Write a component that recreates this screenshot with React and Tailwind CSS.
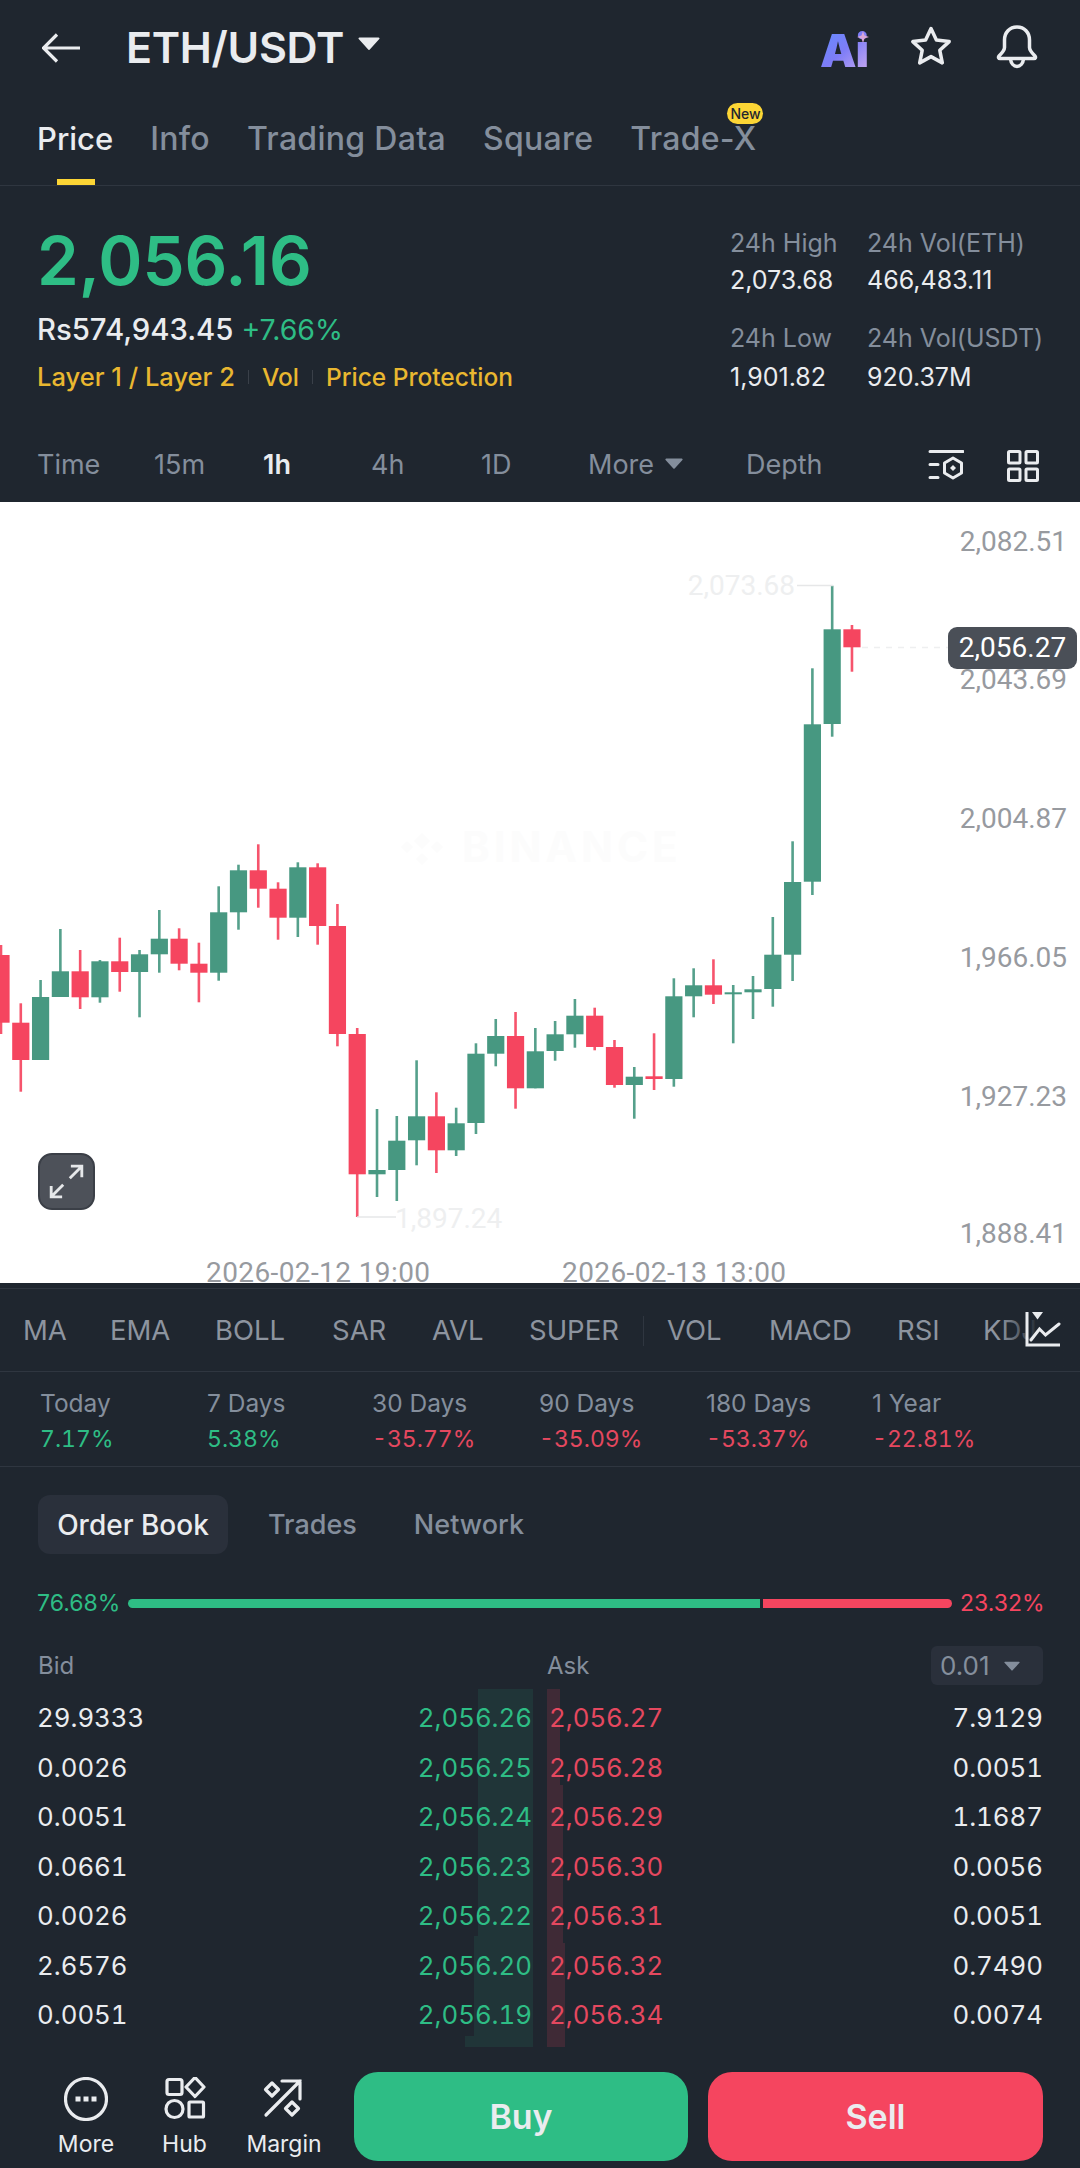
import React from 'react';

const G = '#479881';
const R = '#f5455f';

// [wickTop, bodyTop, bodyBottom, wickBottom, up]
const candles = [
  [945, 955, 1022.7, 1034, 0],
  [1003.3, 1022.7, 1060, 1091.7, 0],
  [980, 997, 1060, 1060, 1],
  [929, 971.3, 997, 997, 1],
  [950, 971.3, 997.3, 1009, 0],
  [960, 961.3, 997.3, 1002.7, 1],
  [937.7, 961.3, 972, 991.7, 0],
  [950, 954.3, 972, 1017.3, 1],
  [910, 938.7, 954.3, 972.7, 1],
  [928.3, 938.7, 963.7, 970.3, 0],
  [942.7, 963.7, 972.7, 1002.3, 0],
  [886.3, 912.3, 972.7, 980.7, 1],
  [864.7, 870.3, 912.3, 929.7, 1],
  [844.3, 870.3, 888.7, 907.7, 0],
  [882.3, 888.7, 917.7, 939.7, 0],
  [862.3, 867.3, 917.7, 937, 1],
  [863.3, 867.3, 926, 944.7, 0],
  [904, 926, 1034, 1046.3, 0],
  [1028, 1034, 1174.3, 1217, 0],
  [1109, 1170, 1174.3, 1197, 1],
  [1116, 1140.7, 1170, 1201, 1],
  [1060.3, 1116.3, 1140.3, 1165.3, 1],
  [1092.3, 1116.3, 1150.3, 1173, 0],
  [1107.7, 1123.3, 1150.3, 1156, 1],
  [1043.3, 1053.7, 1123, 1134, 1],
  [1019, 1036, 1053.7, 1066.3, 1],
  [1012, 1036, 1088.3, 1108.7, 0],
  [1028, 1051.3, 1088.3, 1088.3, 1],
  [1021, 1034.3, 1051, 1060.7, 1],
  [999, 1015.7, 1034.3, 1047.7, 1],
  [1007.7, 1015.7, 1047, 1050.3, 0],
  [1040, 1047, 1085, 1087.7, 0],
  [1067, 1076.7, 1085, 1118.7, 1],
  [1033.3, 1076.3, 1079, 1090, 0],
  [978.3, 996.3, 1079, 1086.7, 1],
  [968.3, 985.3, 996.3, 1017.3, 1],
  [959.3, 985.3, 994.7, 1004, 0],
  [985, 992.3, 994.3, 1043.3, 1],
  [976, 989.3, 992.3, 1019, 1],
  [917, 954.7, 989, 1006.7, 1],
  [841.3, 882, 954.7, 981, 1],
  [668.3, 724.3, 881.7, 895, 1],
  [585.7, 629.3, 724, 736.7, 1],
  [625, 629.3, 647.3, 671.7, 0],
];

const axis = [
  ['2,082.51', 541],
  ['2,043.69', 679],
  ['2,004.87', 818],
  ['1,966.05', 957],
  ['1,927.23', 1096],
  ['1,888.41', 1233],
];

const periods = [
  ['Today', '7.17%', true, 'w-[167px]'],
  ['7 Days', '5.38%', true, 'w-[165px]'],
  ['30 Days', '-35.77%', false, 'w-[167px]'],
  ['90 Days', '-35.09%', false, 'w-[167px]'],
  ['180 Days', '-53.37%', false, 'w-[166px]'],
  ['1 Year', '-22.81%', false, 'w-[165px]'],
];

const book = [
  ['29.9333', '2,056.26', '2,056.27', '7.9129'],
  ['0.0026', '2,056.25', '2,056.28', '0.0051'],
  ['0.0051', '2,056.24', '2,056.29', '1.1687'],
  ['0.0661', '2,056.23', '2,056.30', '0.0056'],
  ['0.0026', '2,056.22', '2,056.31', '0.0051'],
  ['2.6576', '2,056.20', '2,056.32', '0.7490'],
  ['0.0051', '2,056.19', '2,056.34', '0.0074'],
];

const Caret = ({ className }) => (
  <svg viewBox="0 0 22 13" className={className} fill="currentColor">
    <path d="M1.500.5h19a1 1 0 0 1 .8 1.600l-9.500 10.400a1 1 0 0 1-1.600 0L.7 2.100A1 1 0 0 1 1.500.5z" />
  </svg>
);

const Chart = () => (
  <div className="relative h-[781px] shrink-0 overflow-hidden bg-white">
    <svg viewBox="0 502 1080 781" className="absolute inset-0 h-[781px] w-[1080px]">
      {/* watermark */}
      <g fill="#fcfcfc">
        <path d="M422 833l8 8-8 8-8-8zM407 841l6 6-6 6-6-6zM437 841l6 6-6 6-6-6zM422 853l6 6-6 6-6-6z" />
      </g>
      <text x="462" y="862" fontSize="42" fontWeight="700" letterSpacing="4" fill="#fcfcfc" className="font-['Inter',sans-serif]">BINANCE</text>

      {candles.map(([wt, bt, bb, wb, up], i) => {
        const x = 1 + 19.79 * i;
        const c = up ? G : R;
        return (
          <g key={i}>
            <rect x={x - 1.3} y={wt} width="2.6" height={wb - wt} fill={c} fillOpacity="0.92" />
            <rect x={x - 8.6} y={bt} width="17.2" height={bb - bt} fill={c} />
          </g>
        );
      })}

      {/* high / low markers */}
      <line x1="797" y1="585.5" x2="833" y2="585.5" stroke="#e6e7e8" strokeWidth="1.5" />
      <line x1="357" y1="1217" x2="396" y2="1217" stroke="#e6e7e8" strokeWidth="1.5" />
      <line x1="862" y1="647.5" x2="948" y2="647.5" stroke="#eeeff0" strokeWidth="1.5" strokeDasharray="6 6" />

      <g className="font-['Roboto',sans-serif]" fontSize="28">
        <text x="795" y="595" textAnchor="end" fill="#eeeff0">2,073.68</text>
        <text x="395" y="1228" fill="#eeeff0">1,897.24</text>
        {axis.map(([t, y]) => (
          <text key={t} x="1067" y={y + 9.5} textAnchor="end" fill="#979a9f">{t}</text>
        ))}
        <text x="206" y="1281.5" letterSpacing="0.4" fill="#979a9f">2026-02-12 19:00</text>
        <text x="562" y="1281.5" letterSpacing="0.4" fill="#979a9f">2026-02-13 13:00</text>
      </g>
    </svg>

    {/* last price tag */}
    <div className="absolute left-[948px] top-[125px] flex h-[42px] w-[129px] items-center justify-center rounded-[9px] bg-[#4a4f57] font-['Roboto',sans-serif] text-[28px] text-white">
      2,056.27
    </div>

    {/* fullscreen button */}
    <div className="absolute left-[38px] top-[651px] flex h-[57px] w-[57px] items-center justify-center rounded-[14px] border-2 border-[#3b3f47] bg-[#4d5159]">
      <svg viewBox="0 0 32 32" className="h-[35px] w-[35px]" fill="none" stroke="#e6e8ea" strokeWidth="2.6">
        <path d="M19 13L30 2M20 2h10v10M13 19L2 30M2 20v10h10" />
      </svg>
    </div>
  </div>
);

export default function App() {
  return (
    <div className="flex h-[2168px] w-[1080px] flex-col overflow-hidden bg-[#1f262f] font-['Inter',sans-serif] text-[#848e9c]">
      {/* Header */}
      <div className="relative flex h-[95px] shrink-0 items-center pl-[42px]">
        <svg viewBox="0 0 38 30" className="h-[30px] w-[38px] text-[#eaecef]" fill="none" stroke="currentColor" strokeWidth="3.2">
          <path d="M38 15H2M15 1.500L1.500 15 15 28.500" />
        </svg>
        <span className="ml-[46px] text-[43px] leading-none font-semibold tracking-[-0.3px] text-[#eaecef]">ETH/USDT</span>
        <Caret className="ml-[14px] -mt-[9px] h-[13px] w-[22px] text-[#eaecef]" />

        <div className="absolute left-[820px] top-[28px] flex">
          <span className="bg-gradient-to-br from-[#5f8dff] via-[#7d7cf7] to-[#c9a8ee] bg-clip-text text-[46px] leading-[44px] font-black tracking-[-1px] text-transparent">Ai</span>
        </div>
        <svg viewBox="0 0 12 12" className="absolute left-[857px] top-[31px] h-[12px] w-[12px]" fill="#d9a6d8">
          <path d="M6 0l1.500 4.500L12 6 7.500 7.500 6 12 4.500 7.500 0 6l4.500-1.500z" />
        </svg>
        <div className="absolute left-[910px] top-[25px] flex gap-[44px] text-[#eaecef]">
          <svg viewBox="0 0 42 42" className="h-[42px] w-[42px]" fill="none" stroke="currentColor" strokeWidth="3.5" strokeLinejoin="round">
            <path d="M21 3.500l5.400 11.600 12.800 1.500-9.400 8.700 2.500 12.600L21 31.600 9.700 37.900l2.500-12.600-9.400-8.700 12.800-1.500z" />
          </svg>
          <svg viewBox="0 0 42 44" className="h-[44px] w-[42px]" fill="none" stroke="currentColor" strokeWidth="3.500" strokeLinejoin="round">
            <path d="M21 2c-7.500 0-12.500 5.500-12.500 13v7.500c0 3-3 6-5.500 8.500-1 1.200-.4 2.500 1 2.500h34c1.400 0 2-1.300 1-2.500-2.500-2.500-5.500-5.500-5.500-8.500V15C33.500 7.500 28.500 2 21 2z" />
            <path d="M14.500 34c.5 4.500 3.300 7.500 6.500 7.500s6-3 6.500-7.500" />
          </svg>
        </div>
      </div>

      {/* Tabs */}
      <div className="relative flex h-[91px] shrink-0 gap-[37px] border-b border-[#2f3640] pl-[37px] pt-[26px] text-[32px] leading-9 font-medium tracking-[0.3px]">
        <span className="text-[31px] tracking-normal text-[#eaecef]">Price</span>
        <span>Info</span>
        <span>Trading Data</span>
        <span>Square</span>
        <span className="relative">
          Trade-X
          <span className="absolute -right-[7px] -top-[18px] flex h-[21px] w-[36px] items-center justify-center rounded-full bg-[#fcd535] text-[14px] font-medium tracking-normal text-[#1f262f]">New</span>
        </span>
        <div className="absolute bottom-0 left-[57px] h-[6px] w-[38px] bg-[#fcd535]" />
      </div>

      {/* Price stats */}
      <div className="flex h-[243px] shrink-0 items-start pl-[37px]">
        <div className="w-[693px] pt-[45px]">
          <div className="text-[67px] leading-[60px] font-semibold text-[#2ebd85]">2,056.16</div>
          <div className="mt-[21px] flex gap-[8px] text-[28.5px] leading-9">
            <span className="text-[29.3px] font-medium text-[#eaecef]">Rs574,943.45</span>
            <span className="text-[#2ebd85]">+7.66%</span>
          </div>
          <div className="mt-[11px] flex items-center text-[24.5px] leading-9 font-medium text-[#e9b730]">
            <span className="text-[25.5px]">Layer 1 / Layer 2</span>
            <span className="mx-[13px] h-[14px] w-[1px] bg-[#3a4049]" />
            <span>Vol</span>
            <span className="mx-[13px] h-[14px] w-[1px] bg-[#3a4049]" />
            <span>Price Protection</span>
          </div>
        </div>
        <div className="grid grid-cols-[137px_1fr] content-start pt-[39px] text-[25px] leading-9">
          <span>24h High</span>
          <span>24h Vol(ETH)</span>
          <span className="mt-[1px] text-[#eaecef]">2,073.68</span>
          <span className="mt-[1px] text-[#eaecef]">466,483.11</span>
          <span className="mt-[22px]">24h Low</span>
          <span className="mt-[22px]">24h Vol(USDT)</span>
          <span className="mt-[3px] text-[#eaecef]">1,901.82</span>
          <span className="mt-[3px] text-[#eaecef]">920.37M</span>
        </div>
      </div>

      {/* Timeframes */}
      <div className="flex h-[73px] shrink-0 items-center pl-[37px] text-[27px]">
        <span className="w-[117px]">Time</span>
        <span className="w-[109px]">15m</span>
        <span className="w-[108px] font-semibold text-[#eaecef]">1h</span>
        <span className="w-[110px]">4h</span>
        <span className="w-[107px]">1D</span>
        <span className="flex w-[158px] items-center">
          More
          <Caret className="ml-[11px] -mt-[5px] h-[11px] w-[18px]" />
        </span>
        <span className="w-[182px]">Depth</span>
        <svg viewBox="0 0 34 34" className="h-[34px] w-[36px] text-[#eaecef]" fill="none" stroke="currentColor" strokeWidth="3" strokeLinecap="round">
          <path d="M1 2.500h33M1 15.500h8M1 28.500h8" />
          <path d="M24 9l8.500 5v10L24 29l-8.500-5V14z" strokeLinejoin="round" />
          <path d="M24 16l3 3-3 3-3-3z" fill="currentColor" stroke="none" />
        </svg>
        <svg viewBox="0 0 32 32" className="ml-[43px] h-[32px] w-[32px] text-[#eaecef]" fill="none" stroke="currentColor" strokeWidth="3">
          <rect x="1.500" y="1.500" width="11.500" height="11.500" rx="1" />
          <rect x="19" y="1.500" width="11.500" height="11.500" rx="1" />
          <rect x="1.500" y="19" width="11.500" height="11.500" rx="1" />
          <rect x="19" y="19" width="11.500" height="11.500" rx="1" />
        </svg>
      </div>

      <Chart />

      {/* Indicators */}
      <div className="relative mt-[5px] flex h-[84px] shrink-0 items-center border-y border-[#2f3640] pl-[23px] pt-[2px] text-[27.500px] text-[#8d949f]">
        <span className="w-[87px]">MA</span>
        <span className="w-[105px]">EMA</span>
        <span className="w-[117px]">BOLL</span>
        <span className="w-[100px]">SAR</span>
        <span className="w-[97px]">AVL</span>
        <span className="w-[114px]">SUPER</span>
        <span className="h-[30px] w-[1px] bg-[#2f3640]" />
        <span className="ml-[23px] w-[102px]">VOL</span>
        <span className="w-[128px]">MACD</span>
        <span className="w-[86px]">RSI</span>
        <span>KDJ</span>
        <div className="absolute right-0 top-0 h-full w-[80px] bg-gradient-to-r from-transparent via-[#1f262f] to-[#1f262f]" />
        <svg viewBox="0 0 36 36" className="absolute left-[1025px] top-[22px] h-[36px] w-[36px] text-[#eaecef]" fill="none" stroke="currentColor" strokeWidth="3">
          <path d="M2 1v33h33" />
          <path d="M6 29l8.500-11 6 6L34 13" strokeLinecap="round" />
          <path d="M7 1h11l-5.500 7.500z" fill="currentColor" stroke="none" />
        </svg>
      </div>

      {/* Periods */}
      <div className="flex h-[95px] shrink-0 items-start border-b border-[#2f3640] pl-[40px] pt-[13px] text-[24.500px] leading-[36px]">
        {periods.map(([label, value, up, width]) => (
          <div key={label} className={width}>
            <div>{label}</div>
            <div className={`text-[23px] tabular-nums ${up ? 'text-[#2ebd85]' : 'text-[#e5485f]'}`}>{value}</div>
          </div>
        ))}
      </div>

      {/* Order book tabs */}
      <div className="flex h-[87px] shrink-0 items-end pl-[38px] text-[27px] font-medium">
        <span className="flex h-[59px] w-[190px] items-center justify-center rounded-[12px] bg-[#2a303b] text-[28px] text-[#eaecef]">Order Book</span>
        <span className="ml-[40px] pb-[11px] leading-9">Trades</span>
        <span className="ml-[57px] pb-[11px] leading-9">Network</span>
      </div>

      {/* Ratio bar */}
      <div className="mt-[31px] flex h-[36px] shrink-0 items-center pl-[37px] text-[23px]">
        <span className="w-[91px] shrink-0 text-[#2ebd85]">76.68%</span>
        <div className="h-[9px] w-[632px] shrink-0 rounded-l-full bg-[#2ebd85]" />
        <div className="ml-[3px] h-[9px] w-[189px] shrink-0 rounded-r-full bg-[#f5455f]" />
        <span className="ml-[8px] shrink-0 text-[#f5455f]">23.32%</span>
      </div>

      {/* Book header */}
      <div className="mt-[25px] flex h-[39px] shrink-0 items-center pl-[38px] pr-[37px] text-[24px]">
        <span className="w-[509px]">Bid</span>
        <span className="flex-1">Ask</span>
        <span className="flex h-[39px] w-[112px] items-center gap-[14px] rounded-[6px] bg-[#2a303b] pl-[9px] text-[26px]">
          0.01
          <Caret className="h-[10px] w-[16px]" />
        </span>
      </div>

      {/* Book rows */}
      <div className="relative mt-[4px] h-[358px] shrink-0 pt-[5px] text-[25.800px] tabular-nums">
        <div className="absolute left-[478px] top-0 h-[247px] w-[55px] bg-[#2ebd85]/10" />
        <div className="absolute left-[474px] top-[247px] h-[100px] w-[59px] bg-[#2ebd85]/10" />
        <div className="absolute left-[465px] top-[347px] h-[11px] w-[68px] bg-[#2ebd85]/10" />
        <div className="absolute left-[547px] top-0 h-[96px] w-[13px] bg-[#f5455f]/15" />
        <div className="absolute left-[547px] top-[96px] h-[158px] w-[16px] bg-[#f5455f]/15" />
        <div className="absolute left-[547px] top-[254px] h-[104px] w-[18px] bg-[#f5455f]/15" />
        {book.map(([bid, bp, ap, ask], i) => (
          <div key={i} className="relative flex h-[49.500px] items-center pl-[37px] pr-[37px]">
            <span className="w-[200px] text-[#eaecef]">{bid}</span>
            <span className="w-[295px] text-right text-[#2ebd85]">{bp}</span>
            <span className="ml-[17px] text-[#e5485f]">{ap}</span>
            <span className="flex-1 text-right text-[#eaecef]">{ask}</span>
          </div>
        ))}
      </div>

      {/* Bottom bar */}
      <div className="flex flex-1 items-start pl-[37px] pr-[37px] pt-[25px]">
        <div className="flex w-[317px] shrink-0 pt-[5px] text-[23px] leading-7 text-[#eaecef]">
          <div className="flex w-[98px] flex-col items-center">
            <svg viewBox="0 0 44 44" className="h-[44px] w-[44px]" fill="none" stroke="currentColor" strokeWidth="3.200">
              <circle cx="22" cy="22" r="20.500" />
              <path d="M11.500 19.500h5v5h-5zM19.500 19.500h5v5h-5zM27.500 19.500h5v5h-5z" fill="currentColor" stroke="none" />
            </svg>
            <span className="mt-[9px]">More</span>
          </div>
          <div className="flex w-[99px] flex-col items-center">
            <svg viewBox="0 0 44 44" className="h-[44px] w-[44px]" fill="none" stroke="currentColor" strokeWidth="3.200">
              <rect x="4" y="2.500" width="15" height="15" rx="2" />
              <path d="M32 0.500l9 9.500-9 9.500-9-9.500z" strokeLinejoin="round" />
              <circle cx="11.500" cy="32" r="8.500" />
              <rect x="26" y="25" width="14.500" height="15" rx="1" />
            </svg>
            <span className="mt-[9px]">Hub</span>
          </div>
          <div className="flex w-[100px] flex-col items-center">
            <svg viewBox="0 0 44 44" className="h-[44px] w-[44px]" fill="none" stroke="currentColor" strokeWidth="3.200" strokeLinecap="round">
              <path d="M4 38L38 4M20 4h18v18" />
              <path d="M10 6l6.500 6.500-6.500 6.500-6.500-6.500zM30 25l6.500 6.500-6.500 6.500-6.500-6.500z" strokeLinejoin="round" />
            </svg>
            <span className="mt-[9px]">Margin</span>
          </div>
        </div>
        <button className="flex h-[89px] w-[334px] shrink-0 items-center justify-center rounded-[24px] bg-[#2ebd85] text-[34px] font-semibold text-[#eaecef]">Buy</button>
        <button className="ml-[20px] flex h-[89px] w-[335px] shrink-0 items-center justify-center rounded-[24px] bg-[#f5455f] text-[34px] font-semibold text-[#eaecef]">Sell</button>
      </div>
    </div>
  );
}
